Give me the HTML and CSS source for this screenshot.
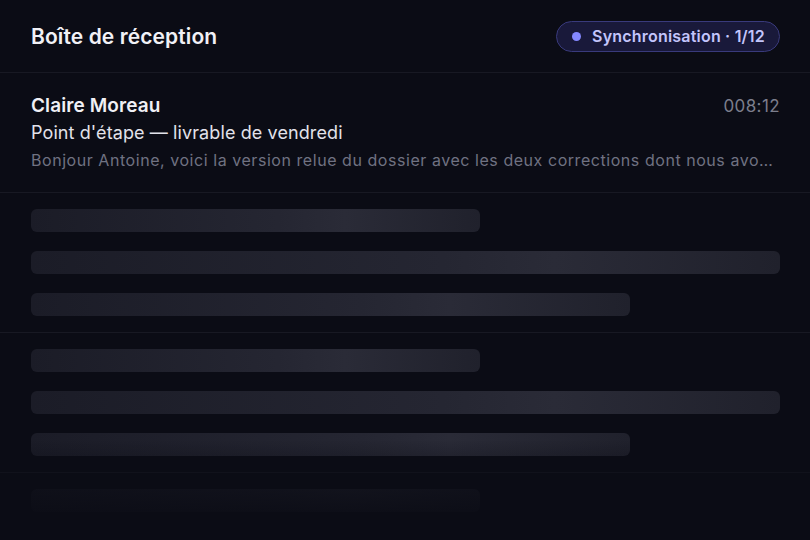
FILE: index.html
```html
<!DOCTYPE html>
<html lang="fr">
<head>
  <meta charset="UTF-8">
  <meta name="viewport" content="width=device-width, initial-scale=1.0">
  <title>Boîte de réception</title>
  <link rel="stylesheet" href="styles.css">
</head>
<body>
  <div class="inbox">
    <header class="inbox-header">
      <h1 class="title">Boîte de réception</h1>
      <div class="sync-badge">
        <span class="dot"></span>
        <span>Synchronisation · 1/12</span>
      </div>
    </header>

    <div class="messages">
      <div class="message">
        <div class="message-top">
          <span class="sender">Claire Moreau</span>
          <span class="time">008:12</span>
        </div>
        <div class="subject">Point d'étape — livrable de vendredi</div>
        <div class="preview">Bonjour Antoine, voici la version relue du dossier avec les deux corrections dont nous avons parlé hier matin.</div>
      </div>

      <div class="message skeleton">
        <div class="bar short"></div>
        <div class="bar full"></div>
        <div class="bar medium"></div>
      </div>
      <div class="message skeleton">
        <div class="bar short"></div>
        <div class="bar full"></div>
        <div class="bar medium"></div>
      </div>
      <div class="message skeleton">
        <div class="bar short"></div>
        <div class="bar full"></div>
        <div class="bar medium"></div>
      </div>
    </div>
  </div>
</body>
</html>
```

FILE: styles.css
```css
body {
  margin: 0;
  background: #0b0c15;
  font-family: Inter, "Noto Sans", sans-serif;
  color: #ececf2;
}
.inbox {
  position: relative;
  width: 810px;
  height: 540px;
  overflow: hidden;
}
.inbox::after {
  content: "";
  position: absolute;
  left: 0;
  right: 0;
  bottom: 0;
  height: 100px;
  background: linear-gradient(rgba(11, 12, 21, 0), rgba(11, 12, 21, 0.75) 45%, #0b0c15 85%);
}
.inbox-header {
  display: flex;
  justify-content: space-between;
  align-items: center;
  height: 72px;
  padding: 0 30px 0 31px;
  border-bottom: 1px solid #181923;
}
.title {
  margin: 0;
  font-size: 21px;
  font-weight: 600;
  letter-spacing: 0.1px;
  color: #f1f1f6;
}
.sync-badge {
  display: flex;
  align-items: center;
  gap: 11px;
  height: 29px;
  padding: 0 14px 0 15px;
  border: 1px solid #393a7c;
  border-radius: 999px;
  background: #19193a;
  color: #c3c5fb;
  font-size: 16px;
  font-weight: 600;
  letter-spacing: 0.2px;
}
.dot {
  width: 9px;
  height: 9px;
  border-radius: 50%;
  background: #8588ff;
}
.message {
  padding: 21px 30px 19px 31px;
  border-bottom: 1px solid #181923;
}
.message-top {
  display: flex;
  justify-content: space-between;
  align-items: baseline;
}
.sender {
  font-size: 19px;
  font-weight: 600;
  line-height: 24px;
  letter-spacing: 0.1px;
  color: #f0f0f5;
}
.time {
  font-size: 17px;
  letter-spacing: 0.4px;
  color: #7c7e8c;
}
.subject {
  margin-top: 2px;
  font-size: 18px;
  line-height: 26px;
  letter-spacing: 0.1px;
  color: #e2e2ea;
}
.preview {
  margin-top: 1px;
  font-size: 16px;
  line-height: 26px;
  letter-spacing: 0.55px;
  color: #707282;
  white-space: nowrap;
  overflow: hidden;
  text-overflow: ellipsis;
}
.skeleton {
  display: flex;
  flex-direction: column;
  gap: 19px;
  padding: 16px 30px 16px 31px;
}
.bar {
  height: 23px;
  border-radius: 6px;
  background: linear-gradient(90deg, #1b1c27 0%, #252632 55%, #2a2b37 70%, #20212c 100%);
}
.short {
  width: 449px;
}
.full {
  width: 749px;
}
.medium {
  width: 599px;
}
```
